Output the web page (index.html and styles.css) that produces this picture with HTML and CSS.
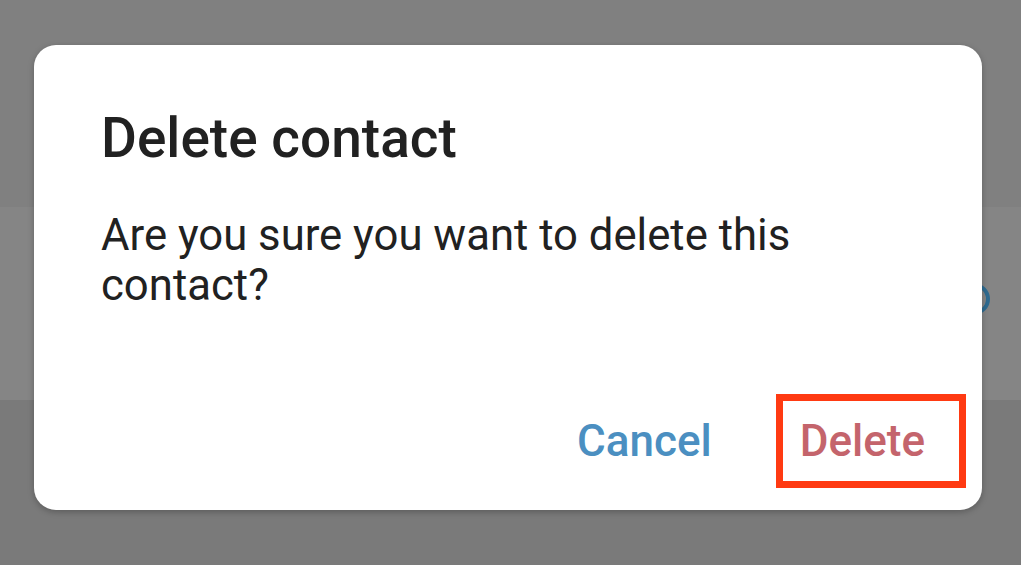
FILE: index.html
```html
<!DOCTYPE html>
<html lang="en">
<head>
    <meta charset="UTF-8">
    <meta name="viewport" content="width=device-width, initial-scale=1.0">
    <title>Delete contact</title>
    <link rel="stylesheet" href="styles.css">
</head>
<body>
    <div class="screen">
        <div class="screen-top"></div>
        <div class="screen-row">
            <span class="row-icon"></span>
        </div>
        <div class="screen-bottom"></div>
    </div>

    <div class="dialog">
        <h1 class="dialog-title">Delete contact</h1>
        <p class="dialog-text">Are you sure you want to delete this contact?</p>
        <div class="dialog-actions">
            <button class="btn btn-cancel">Cancel</button>
            <span class="highlight">
                <button class="btn btn-delete">Delete</button>
            </span>
        </div>
    </div>
</body>
</html>
```

FILE: styles.css
```css
html, body {
    margin: 0;
    height: 100%;
}
body {
    font-family: Roboto, "Noto Sans", Arial, sans-serif;
    background-color: #7b7b7b;
    overflow: hidden;
}
.screen {
    display: flex;
    flex-direction: column;
    height: 100%;
}
.screen-top {
    height: 207px;
    background-color: #808080;
}
.screen-row {
    height: 193px;
    background-color: #858585;
    position: relative;
}
.screen-bottom {
    flex: 1;
    background-color: #7a7a7a;
}
.row-icon {
    position: absolute;
    left: 958px;
    top: 76px;
    width: 24px;
    height: 24px;
    border: 4px solid #2f6b90;
    border-radius: 50%;
}

.dialog {
    position: absolute;
    left: 34px;
    top: 45px;
    width: 948px;
    height: 465px;
    box-sizing: border-box;
    background-color: #fff;
    border-radius: 22px;
    box-shadow: 0 2px 6px rgba(0, 0, 0, 0.25);
    padding: 66px 16px 0 67px;
    display: flex;
    flex-direction: column;
}
.dialog-title {
    margin: 0;
    font-size: 55px;
    font-weight: 500;
    line-height: 1;
    color: #212121;
}
.dialog-text {
    margin: 0;
    margin-top: 44px;
    width: 760px;
    font-size: 43.7px;
    line-height: 50px;
    color: #212121;
}
.dialog-actions {
    margin-top: auto;
    margin-bottom: 22px;
    display: flex;
    justify-content: flex-end;
    align-items: center;
    gap: 64px;
}
.btn {
    font-family: inherit;
    font-size: 44px;
    font-weight: 500;
    background: none;
    border: none;
    padding: 0;
    cursor: pointer;
    line-height: 1;
}
.btn-cancel {
    color: #4b8fc1;
}
.btn-delete {
    color: #c4646c;
}
.highlight {
    display: flex;
    align-items: center;
    height: 80px;
    padding: 0 34px 0 17px;
    border: 7px solid #ff3a12;
}
```
